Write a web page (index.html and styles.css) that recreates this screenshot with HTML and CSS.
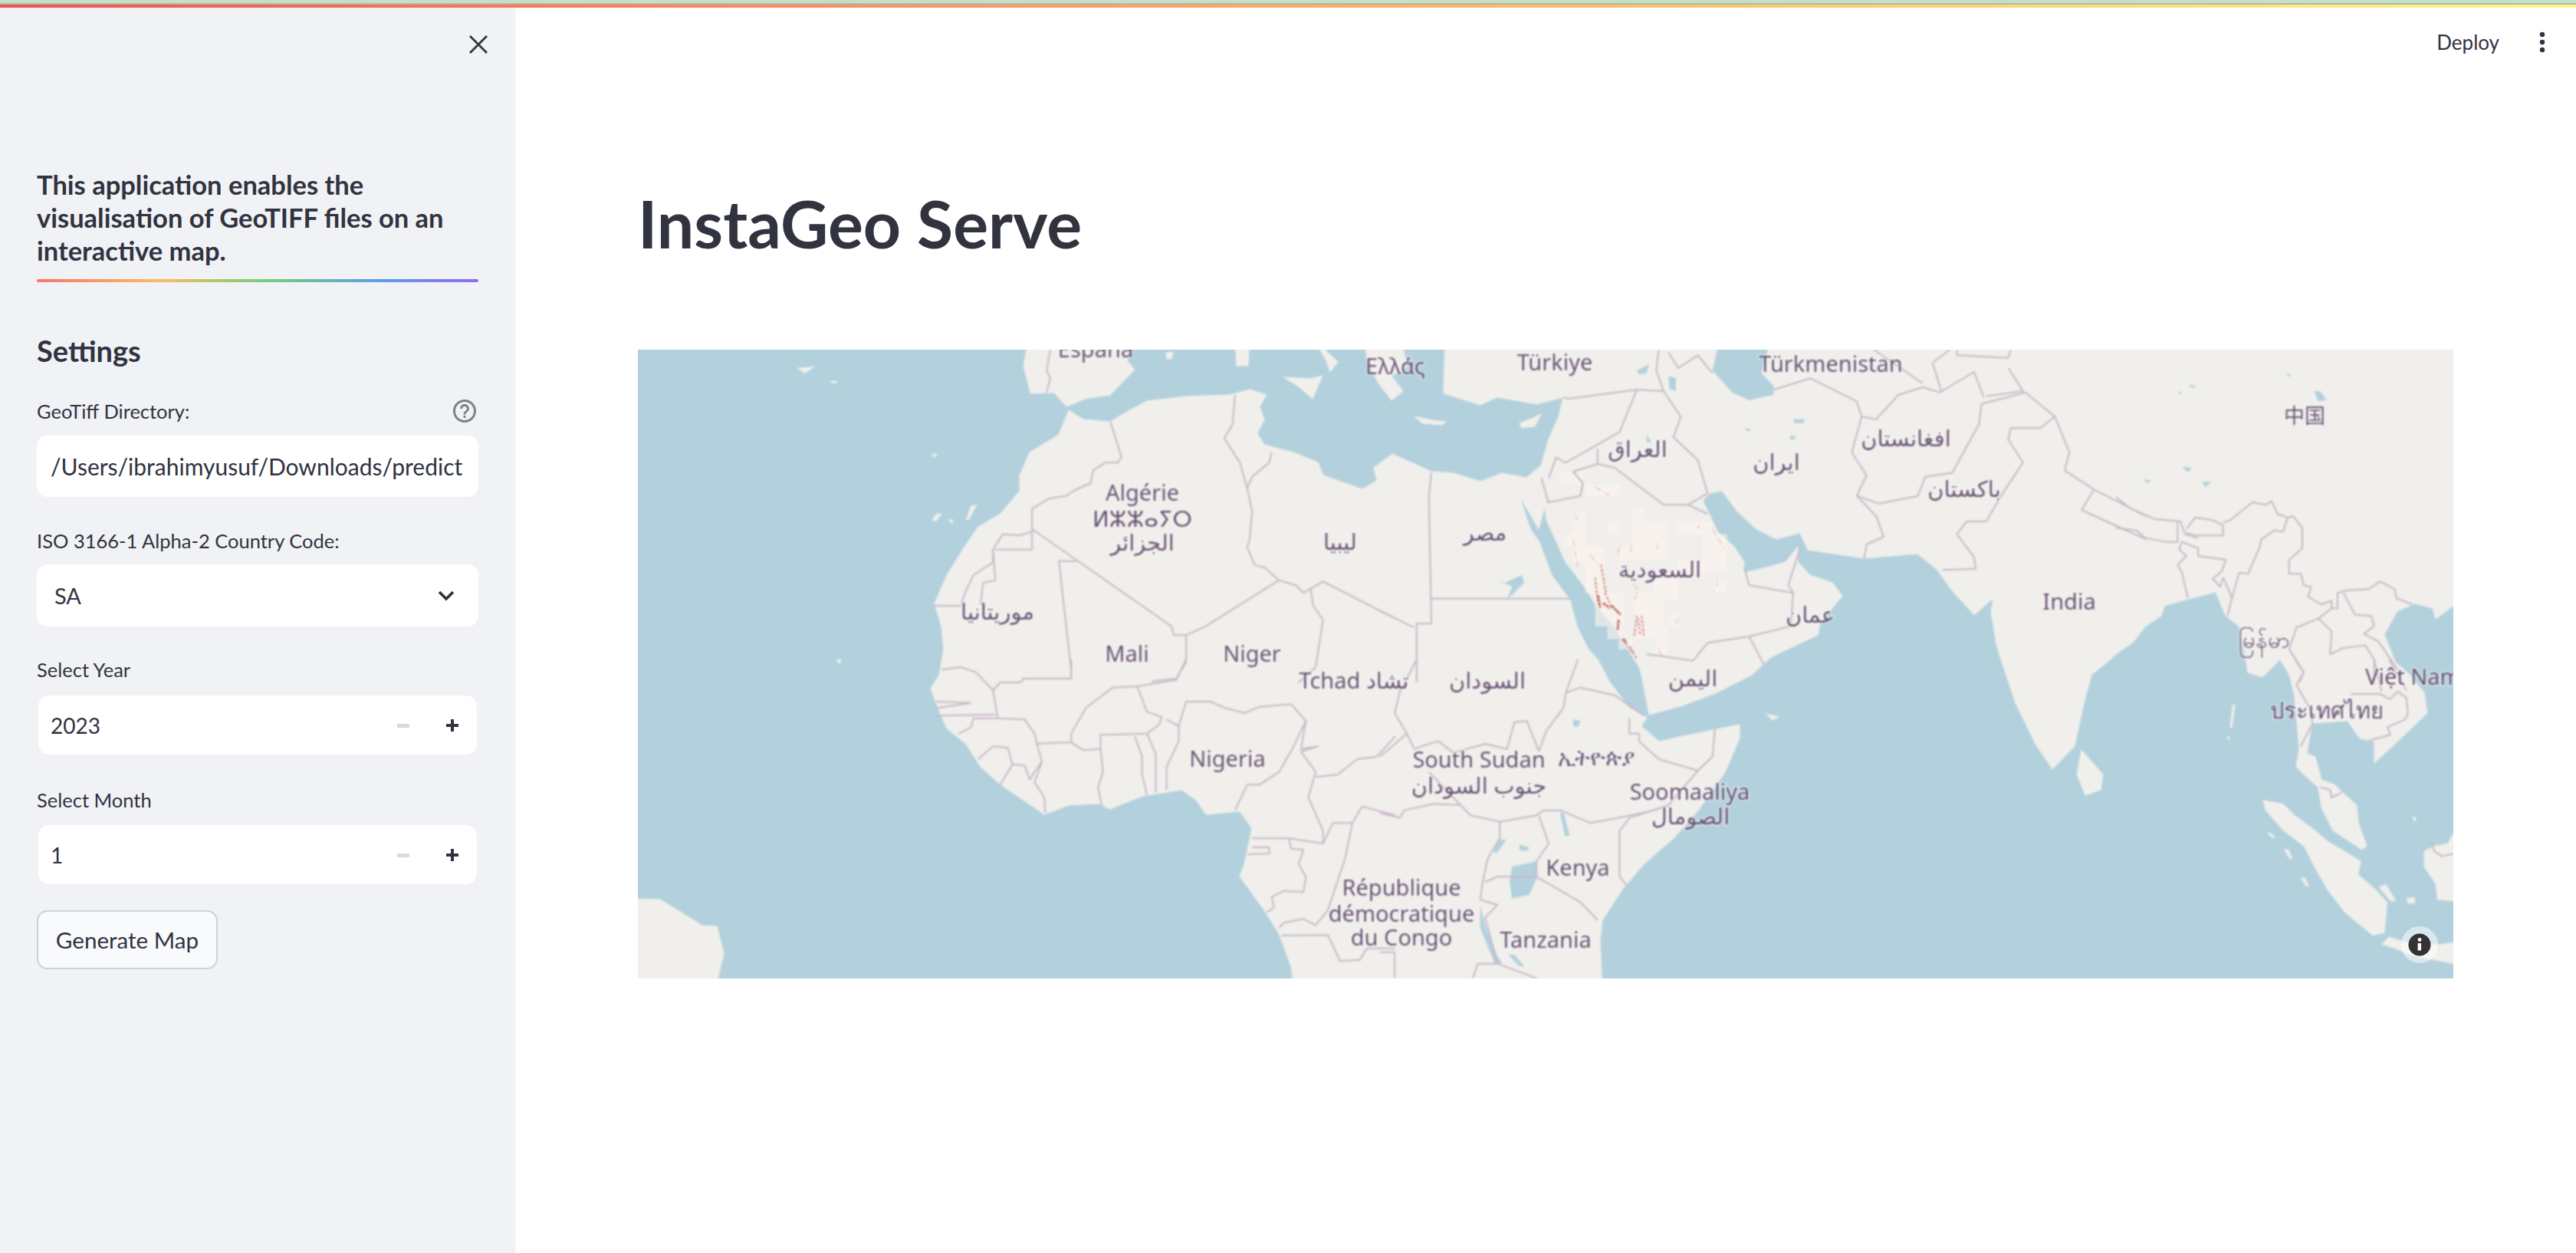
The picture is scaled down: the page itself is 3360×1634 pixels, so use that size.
FILE: index.html
```html
<!DOCTYPE html>
<html lang="en">
<head>
    <meta charset="UTF-8">
    <meta name="viewport" content="width=device-width, initial-scale=1.0">
    <title>InstaGeo Serve</title>
    <link rel="stylesheet" href="styles.css">
</head>
<body>

<div class="top-strip">
    <div class="strip-green"></div>
    <div class="strip-grey"></div>
    <div class="strip-rainbow"></div>
</div>

<div class="app">
    <aside class="sidebar">
        <div class="sidebar-close">
            <svg width="26" height="26" viewBox="0 0 26 26"><path class="close-x" d="M2 2L24 24M24 2L2 24"/></svg>
        </div>

        <p class="intro">This application enables the visualisation of GeoTIFF files on an interactive map.</p>
        <div class="rainbow-rule"></div>

        <h3 class="settings-title">Settings</h3>

        <div class="field-first">
            <div class="label label-row">
                <span>GeoTiff Directory:</span>
                <svg class="help-icon" width="36" height="36" viewBox="0 0 24 24"><path d="M11 18h2v-2h-2v2zm1-16C6.48 2 2 6.48 2 12s4.48 10 10 10 10-4.48 10-10S17.52 2 12 2zm0 18c-4.41 0-8-3.59-8-8s3.59-8 8-8 8 3.59 8 8-3.59 8-8 8zm0-14c-2.21 0-4 1.79-4 4h2c0-1.1.9-2 2-2s2 .9 2 2c0 2-3 1.75-3 5h2c0-2.25 3-2.5 3-5 0-2.21-1.79-4-4-4z"/></svg>
            </div>
            <input class="text-input" type="text" value="/Users/ibrahimyusuf/Downloads/predict" readonly>
        </div>

        <div class="field">
            <div class="label label-tight">ISO 3166-1 Alpha-2 Country Code:</div>
            <div class="select-box">
                <span>SA</span>
                <svg width="22" height="14" viewBox="0 0 22 14"><path class="chevron" d="M2 2L11 11L20 2"/></svg>
            </div>
        </div>

        <div class="field field-year">
            <div class="label">Select Year</div>
            <div class="number-box">
                <input class="number-input" type="text" value="2023" readonly>
                <div class="step-btn step-minus"></div>
                <div class="step-btn step-plus"></div>
            </div>
        </div>

        <div class="field">
            <div class="label label-tight">Select Month</div>
            <div class="number-box">
                <input class="number-input" type="text" value="1" readonly>
                <div class="step-btn step-minus"></div>
                <div class="step-btn step-plus"></div>
            </div>
        </div>

        <button class="generate-btn">Generate Map</button>
    </aside>

    <main class="main">
        <div class="toolbar">
            <span class="deploy">Deploy</span>
            <svg width="8" height="28" viewBox="0 0 8 28"><circle cx="4" cy="4" r="3.2"/><circle cx="4" cy="14" r="3.2"/><circle cx="4" cy="24" r="3.2"/></svg>
        </div>

        <h1 class="page-title">InstaGeo Serve</h1>

        <div class="map-wrap">
            <svg class="map" width="2368" height="820" viewBox="832 456 2368 820">
                <!-- land, in page coordinates; outer edges run past the frame so the blur doesn't fade them -->
                <g class="land">
                    <polygon points="1885,440 3220,440 3220,775 3200,790 3177,807 3173,793 3150,787 3127,797 3110,827 3124,863 3143,880 3162,903 3166,930 3127,967 3097,995 3097,967 3078,963 3062,940 3016,943 3013,957 3009,983 3020,987 3028,1017 3045,1023 3055,1033 3074,1050 3076,1073 3087,1103 3081,1108 3043,1083 3028,1053 3024,1027 3005,1010 2995,1000 2999,977 2993,907 2986,880 2974,860 2951,883 2932,877 2926,840 2921,817 2903,803 2890,772 2848,783 2823,790 2819,803 2798,817 2783,837 2760,853 2753,860 2728,880 2718,917 2706,973 2677,1003 2655,970 2629,917 2610,860 2604,840 2597,797 2600,780 2575,802 2546,770 2527,743 2501,722 2431,728 2358,717 2348,695 2317,703 2291,690 2266,667 2246,640 2230,643 2221,653 2234,680 2240,693 2262,713 2275,733 2275,747 2304,740 2329,733 2345,713 2345,733 2361,750 2390,760 2403,777 2374,813 2371,828 2310,857 2285,880 2240,903 2195,920 2151,932 2141,880 2138,870 2119,840 2106,817 2084,793 2068,767 2042,733 2017,678 2015,660 2007,690 1982,647 1996,690 2008,707 2024,750 2048,783 2057,817 2072,847 2084,860 2100,890 2125,923 2148,935 2141,947 2164,967 2195,960 2234,952 2269,945 2269,963 2250,1007 2215,1057 2183,1093 2144,1127 2116,1160 2090,1200 2087,1227 2090,1290 1688,1290 1684,1260 1668,1217 1649,1187 1617,1143 1623,1127 1633,1080 1617,1058 1573,1062 1560,1043 1541,1030 1490,1038 1448,1055 1432,1048 1394,1050 1362,1062 1330,1040 1305,1023 1279,1000 1260,970 1235,950 1225,927 1214,898 1225,880 1231,847 1228,817 1219,787 1235,750 1260,710 1276,687 1305,670 1330,640 1330,620 1343,590 1381,567 1394,535 1413,547 1448,550 1470,537 1496,523 1547,517 1604,515 1630,508 1652,515 1643,530 1649,547 1640,565 1649,580 1687,590 1719,603 1726,620 1777,638 1796,627 1792,610 1816,592 1845,605 1867,615 1896,617 1931,628 1959,617 1991,623 2010,607 2020,573 2033,543 2039,518 2004,527 1953,518 1931,528 1883,513"/>
                    <!-- spain -->
                    <polygon points="1342,440 1335,477 1344,513 1375,512 1391,530 1416,520 1448,515 1480,482 1470,470 1482,440"/>
                    <!-- south america corner -->
                    <polygon points="815,1172 861,1173 884,1187 916,1207 935,1208 944,1243 933,1290 815,1290"/>
                    <!-- med islands and italy -->
                    <polygon points="1611,440 1630,440 1628,477 1613,477"/>
                    <polygon points="1712,440 1745,472 1735,485 1730,470"/>
                    <polygon points="1675,492 1710,494 1725,490 1712,520 1695,505"/>
                    <polygon points="1521,460 1530,459 1528,468 1522,468"/>
                    <polygon points="1780,440 1828,440 1835,480 1815,490 1830,510 1815,522 1798,500 1783,470"/>
                    <polygon points="1845,543 1868,548 1886,550 1880,554 1855,552"/>
                    <polygon points="1982,552 2000,545 2010,540 2002,556 1985,558"/>
                    <!-- sri lanka, socotra -->
                    <polygon points="2715,978 2743,1010 2740,1030 2720,1037 2709,1010"/>
                    <polygon points="2304,931 2320,935 2312,939"/>
                </g>

                <!-- water on land, traced off the crops of the map -->
                <g transform="translate(1800 440) scale(0.6378 0.3333)" class="water">
                    <polygon points="695,0 680,130 720,215 755,245 805,225 805,190 780,140 800,0"/>
                    <polygon points="525,130 550,105 545,140 530,145"/>
                    <polygon points="590,150 605,160 605,210 592,200"/>
                    <polygon points="845,320 868,320 866,335 848,335"/>
                    <polygon points="745,355 760,360 752,368"/>
                    <polygon points="840,385 850,385 848,400 838,400"/>
                    <polygon points="235,945 255,960 290,930 295,960 260,1025 270,975"/>
                    <polygon points="545,380 555,410 545,410"/>
                </g>
                <g transform="translate(1800 860) scale(0.6378 0.3333)" class="water">
                    <polygon points="270,810 320,790 320,860 305,920 270,935 265,870"/>
                    <polygon points="395,235 410,240 405,265 395,260"/>
                    <polygon points="368,600 376,600 388,690 378,690"/>
                    <polygon points="245,705 258,705 238,760 232,750"/>
                    <polygon points="205,960 215,1040 240,1160 250,1190 235,1190 205,1050"/>
                    <polygon points="262,1155 275,1155 295,1200 285,1200"/>
                    <polygon points="285,725 305,735 300,750 285,745"/>
                </g>
                <g transform="translate(2760 440) scale(0.3827 0.3333)" class="water">
                    <polygon points="675,210 695,210 718,245 690,250"/>
                    <polygon points="245,185 275,190 260,198"/>
                    <polygon points="225,505 258,510 245,528"/>
                    <polygon points="292,565 325,565 305,585"/>
                    <polygon points="95,555 120,560 105,570"/>
                    <polygon points="210,212 228,215 215,222"/>
                    <polygon points="580,140 596,145 588,155"/>
                </g>

                <!-- islands east side -->
                <g transform="translate(2760 860) scale(0.3827 0.3333)" class="land">
                    <polygon points="500,550 570,565 610,610 680,670 720,710 780,750 835,790 825,840 885,900 925,950 915,1070 875,1080 780,990 720,900 680,820 640,730 570,670 510,590"/>
                    <polygon points="905,1115 930,1085 1000,1110 1100,1115 1200,1100 1200,1200 1100,1180 1000,1155 950,1130"/>
                    <polygon points="1200,660 1150,680 1130,720 1085,730 1050,750 1050,810 1090,880 1095,940 1200,950"/>
                    <polygon points="895,890 920,880 955,945 935,945"/>
                    <polygon points="990,935 1018,930 1018,955 995,955"/>
                    <polygon points="572,740 588,745 602,780 590,778"/>
                    <polygon points="630,852 645,855 658,890 645,885"/>
                    <polygon points="515,675 530,680 545,700 530,695"/>
                    <polygon points="398,175 406,178 395,270 388,265"/>
                    <polygon points="378,300 388,305 384,318"/>
                    <polygon points="1010,615 1025,620 1018,635"/>
                </g>
                <g transform="translate(820 440) scale(0.6378 0.3333)" class="land">
                    <polygon points="345,120 380,115 360,140"/>
                    <polygon points="620,455 632,458 625,470"/>
                    <polygon points="412,170 428,172 420,182"/>
                    <polygon points="700,660 712,655 695,715 690,712"/>
                    <polygon points="630,690 640,690 628,720 620,715"/>
                    <polygon points="655,712 664,715 660,730"/>
                    <polygon points="425,1260 435,1262 430,1278"/>
                </g>

                <!-- saudi heat layer -->
                <g transform="translate(1800 440) scale(0.6378 0.3333)">
                    <path class="heat-tiles" d="M395 680h25v200h-25zM375 770h25v50h-25zM515 670h25v190h-25zM465 720h25v50h-25zM420 575h70v50h-70zM610 720h70v50h-70zM540 720h50v150h-50zM660 770h50v150h-50zM420 820h40v180h-40zM490 820h70v50h-70zM610 870h70v50h-70zM560 920h50v110h-50zM685 950h25v50h-25zM440 1000h60v130h-60zM520 1000h60v175h-60zM465 1130h30v50h-30zM488 1180h30v40h-30zM565 1130h25v120h-25zM590 1080h20v50h-20zM365 525h50v50h-50z"/>
                    <path class="heat-dots" d="M398 690L405 720M395 790L405 900M655 730L650 745M680 750L705 830M440 585L470 620M490 820L485 860M515 815L510 855M565 805L572 845M690 950L690 975M610 1100L605 1115M570 1220L575 1245M500 890L530 1000M430 850L445 890M525 1000L520 1040"/>
                    <path class="heat-dense" d="M440 940L446 1040M452 890L462 1000M460 1000L475 1060M525 1090L520 1170M535 1090L540 1170M528 1100L532 1160M495 1180L525 1255M512 1210L520 1240"/>
                    <path class="heat-core" d="M446 1010L450 1058M456 1040L470 1058M474 1050L492 1085M488 1105L486 1145M498 1180L504 1196"/>
                </g>

                <!-- borders: each group keeps the scale of the crop it was read from -->
                <g transform="translate(820 440) scale(0.6378 0.3333)" class="borders">
                    <polyline points="862,48 855,130 862,160 855,215"/>
                    <polyline points="985,330 1000,420 1008,470 1000,490 975,490 950,520 945,570 910,600 895,620 860,630 825,670 825,830 750,830"/>
                    <polyline points="825,760 800,775 765,770 745,830 745,880 705,930 690,990 680,1040"/>
                    <polyline points="745,830 750,950 725,960 720,1040 730,1060"/>
                    <polyline points="625,1050 680,1050"/>
                    <polyline points="825,750 915,870 1080,1090 1110,1130 1115,1165 1140,1165 1180,1130 1330,950"/>
                    <polyline points="915,875 880,875 890,1050 905,1300 905,1335 805,1335"/>
                    <polyline points="1240,225 1235,340 1218,395 1250,490 1265,590"/>
                    <polyline points="1315,450 1310,490 1275,545 1265,590"/>
                    <polyline points="1265,590 1275,680 1270,790 1265,820 1280,890 1300,900 1330,950"/>
                    <polyline points="1330,950 1365,970 1380,1000 1420,955 1568,1100"/>
                    <polyline points="1395,985 1400,1050 1420,1105 1405,1290 1370,1350"/>
                    <polyline points="1140,1165 1140,1270 1120,1335 1070,1345"/>
                </g>
                <g transform="translate(820 860) scale(0.6378 0.3333)" class="borders">
                    <polyline points="640,40 680,30 710,50 745,120 760,90 800,90 810,75 905,75 905,0"/>
                    <polyline points="745,120 755,230 810,235 830,290 835,330 885,325 905,325 930,355 965,350"/>
                    <polyline points="905,325 905,290 935,190 990,110 1040,105 1120,80 1140,0"/>
                    <polyline points="1040,105 1060,205 1090,225 1085,255 1060,290 965,295 965,350 970,440 960,500 968,575"/>
                    <polyline points="1035,300 1050,380 1050,450 1060,530"/>
                    <polyline points="1060,290 1078,370 1078,520"/>
                    <polyline points="1100,235 1125,260 1125,320 1100,420 1100,510"/>
                    <polyline points="1125,260 1140,165 1190,165 1220,190 1260,210 1290,185 1355,175 1385,240 1360,340 1330,440 1290,490 1265,490 1240,590"/>
                    <polyline points="1385,240 1375,350 1410,340 1375,360 1405,440 1390,540 1420,670 1420,720"/>
                    <polyline points="1405,460 1450,450 1490,390 1530,380 1568,300"/>
                    <polyline points="835,330 845,400 830,480 850,540 852,600"/>
                    <polyline points="755,230 705,230 700,265 675,290"/>
                    <polyline points="715,390 745,340 775,345 785,410 760,490"/>
                    <polyline points="785,410 810,415 820,470 830,440 845,400"/>
                    <polyline points="1275,700 1350,700 1420,720"/>
                    <polyline points="1350,700 1355,740 1380,745 1370,800 1385,850 1380,910 1340,905 1315,930 1320,970 1305,990"/>
                    <polyline points="1275,735 1310,735 1310,760 1265,762"/>
                    <polyline points="1420,720 1440,640 1480,640 1500,575 1568,610"/>
                    <polyline points="1480,640 1465,780 1430,980 1405,1040 1380,1015 1340,1030 1330,1050"/>
                    <polyline points="1335,1080 1430,1078 1455,1180 1495,1175 1510,1130 1568,1130"/>
                    <polyline points="630,165 700,170 630,190"/>
                    <polyline points="630,220 750,215"/>
                </g>
                <g transform="translate(1800 440) scale(0.6378 0.3333)" class="borders">
                    <polyline points="105,530 100,620 105,1120 75,1120 75,1350"/>
                    <polyline points="0,1070 70,1135"/>
                    <polyline points="105,1022 390,1022"/>
                    <polyline points="330,550 345,650"/>
                    <polyline points="345,645 410,620 415,570 395,525 445,495 480,510 580,655 630,655 670,690"/>
                    <polyline points="375,235 385,240 525,205 580,210"/>
                    <polyline points="525,205 490,370 380,490 360,470 345,550"/>
                    <polyline points="580,210 615,310 600,390 650,480 670,610 630,655"/>
                    <polyline points="445,435 445,495"/>
                    <polyline points="805,205 880,160 975,250 985,310 1015,320 1060,225 1110,195 1145,215 1215,135 1235,235"/>
                    <polyline points="985,310 965,450 995,540 975,620 1015,700 1030,780 995,810 990,865"/>
                    <polyline points="975,620 1020,650 1100,620 1115,545 1170,530 1225,340 1230,260 1320,215"/>
                    <polyline points="1320,215 1380,310 1350,355 1290,355 1285,400 1315,490 1270,620 1240,720 1200,720 1180,770 1215,860 1218,905 1150,910"/>
                    <polyline points="545,1240 570,1245 640,1265 670,1195 755,1170 840,1130 845,1000 755,970 745,900"/>
                    <polyline points="755,1170 785,1280"/>
                    <polyline points="845,1000 835,970 850,880 860,820"/>
                    <polyline points="570,48 565,130 580,210"/>
                    <polyline points="590,60 610,120 650,70 680,140"/>
                    <polyline points="1010,48 1110,180"/>
                    <polyline points="1130,100 1165,48"/>
                    <polyline points="1130,100 1148,210"/>
                    <polyline points="1180,48 1180,70 1285,80 1290,48"/>
                    <polyline points="1285,120 1315,210 1240,230"/>
                    <polyline points="1380,310 1410,450 1400,520 1460,595 1568,700"/>
                    <polyline points="1460,595 1435,675 1520,750 1568,790"/>
                </g>
                <g transform="translate(1800 860) scale(0.6378 0.3333)" class="borders">
                    <polyline points="75,0 40,130 30,210 55,290 70,350 100,330 120,320 150,365 215,330 260,350 275,245 300,240 325,360"/>
                    <polyline points="55,290 0,380"/>
                    <polyline points="100,440 165,570 185,610 245,635 320,610 335,590 370,590 430,640 500,615 560,590 590,570"/>
                    <polyline points="0,600 40,620 50,590 110,565 165,570"/>
                    <polyline points="405,0 380,130 375,190 340,280 325,360"/>
                    <polyline points="380,130 410,110 480,140 540,220"/>
                    <polyline points="510,230 510,290 530,290 530,320 570,390 650,435 680,380 685,270"/>
                    <polyline points="650,435 590,570 510,620 490,670 490,850 505,885"/>
                    <polyline points="325,610 345,720 320,790 320,850 240,850 215,870"/>
                    <polyline points="320,850 410,950 445,1020"/>
                    <polyline points="245,635 245,700 220,780 210,870 205,940 240,960 215,1010 240,1190 320,1247"/>
                    <polyline points="190,1247 200,1190 240,1190"/>
                    <polyline points="0,1145 30,1145 30,1247"/>
                </g>
                <g transform="translate(2760 440) scale(0.3827 0.3333)" class="borders">
                    <polyline points="0,625 50,670 130,710 220,720 235,770 280,785"/>
                    <polyline points="0,745 70,755 100,785 170,800 210,800 210,720"/>
                    <polyline points="240,750 270,705 330,715 365,735 365,775 270,775 240,765"/>
                    <polyline points="365,725 390,715 465,645 510,655 530,640 550,690 585,705 570,760 540,755 495,790 490,820 450,925 420,920 395,1020 380,1090"/>
                    <polyline points="585,705 605,700 635,745 635,825 590,870 590,925 630,925 640,970 665,975 655,1015 700,1045 735,1030 735,1060 755,1060 755,1000 785,990 860,985 900,955 950,985 955,1020 1010,1045"/>
                    <polyline points="225,800 280,825 280,855 375,870 360,915 330,945 355,975 365,940 385,990 395,1020"/>
                    <polyline points="225,800 215,830 240,855 210,890 225,920 245,1020"/>
                    <polyline points="735,1060 690,1100 615,1135 590,1220 640,1310 625,1350"/>
                    <polyline points="690,1100 735,1150 730,1240 775,1215 850,1205 880,1260 880,1350"/>
                    <polyline points="775,1000 815,1085 870,1090 880,1130 845,1160 895,1190 960,1300"/>
                </g>
                <g transform="translate(2760 860) scale(0.3827 0.3333)" class="borders">
                    <polyline points="610,0 640,50 615,100 660,190 670,250 630,340"/>
                    <polyline points="800,135 900,135 935,155 960,125 990,150 995,210 985,235 925,265 935,295 870,315 860,320"/>
                    <polyline points="880,0 905,125"/>
                    <polyline points="930,0 990,120"/>
                    <polyline points="695,500 730,510 735,540 770,520"/>
                    <polyline points="1075,715 1085,750 1110,770 1150,760"/>
                </g>

                <!-- place names -->
                <g class="labels">
                    <text x="1429" y="466">España</text>
                    <text x="1820" y="488">Ελλάς</text>
                    <text x="2028" y="483">Türkiye</text>
                    <text x="2388" y="485">Türkmenistan</text>
                    <text x="3006" y="552" class="cjk">中国</text>
                    <text x="2136" y="596">العراق</text>
                    <text x="2486" y="582">افغانستان</text>
                    <text x="2317" y="613">ايران</text>
                    <text x="2562" y="648">باكستان</text>
                    <text x="1490" y="653">Algérie</text>
                    <text x="1490" y="687">ⵍⵣⵣⴰⵢⵔ</text>
                    <text x="1490" y="718">الجزائر</text>
                    <text x="1748" y="717">ليبيا</text>
                    <text x="1937" y="705">مصر</text>
                    <text x="2165" y="753">السعودية</text>
                    <text x="2699" y="795">India</text>
                    <text x="1301" y="808">موريتانيا</text>
                    <text x="2361" y="812">عمان</text>
                    <text x="2953" y="845">မြန်မာ</text>
                    <text x="1470" y="863">Mali</text>
                    <text x="1633" y="863">Niger</text>
                    <text x="1766" y="898">Tchad تشاد</text>
                    <text x="1940" y="898">السودان</text>
                    <text x="2208" y="895">اليمن</text>
                    <text x="3085" y="893" class="label-start">Việt Nam</text>
                    <text x="3035" y="937">ประเทศไทย</text>
                    <text x="1601" y="1000">Nigeria</text>
                    <text x="1929" y="1001">South Sudan</text>
                    <text x="2082" y="998">ኢትዮጵያ</text>
                    <text x="1929" y="1035">جنوب السودان</text>
                    <text x="2204" y="1043">Soomaaliya</text>
                    <text x="2205" y="1075">الصومال</text>
                    <text x="2058" y="1142">Kenya</text>
                    <text x="1828" y="1168">République</text>
                    <text x="1828" y="1202">démocratique</text>
                    <text x="1828" y="1233">du Congo</text>
                    <text x="2016" y="1236">Tanzania</text>
                </g>
            </svg>

            <div class="map-info">
                <svg width="30" height="30" viewBox="0 0 30 30">
                    <circle cx="15" cy="15" r="14.5" fill="#333333"/>
                    <circle cx="15" cy="8.5" r="2.4" fill="#ffffff"/>
                    <path d="M12.6 13h4.4v9.5h-4.4z" fill="#ffffff"/>
                </svg>
            </div>
        </div>
    </main>
</div>

</body>
</html>
```

FILE: styles.css
```css
html, body {
    margin: 0;
    padding: 0;
    background: #ffffff;
}
body {
    font-family: 'Lato', 'Noto Sans', sans-serif;
    color: #31333f;
    width: 3360px;
    height: 1634px;
    overflow: hidden;
}

/* top strip */
.strip-green { height: 4px; background: #c8dfc6; }
.strip-grey { height: 2px; background: #a9bcab; }
.strip-rainbow { height: 4px; background: linear-gradient(90deg, #f0524f, #ff8a5c 30%, #fff68a); }

.app {
    display: flex;
    height: 1624px;
}

/* sidebar */
.sidebar {
    width: 672px;
    box-sizing: border-box;
    padding: 0 48px;
    background: #f0f2f6;
    flex-shrink: 0;
}
.sidebar-close {
    display: flex;
    justify-content: flex-end;
    height: 209px;
    padding-top: 35px;
    margin-right: -13px;
    box-sizing: border-box;
}
.close-x {
    fill: none;
    stroke: #31333f;
    stroke-width: 2.8;
}
.intro {
    margin: 0;
    font-size: 34.5px;
    line-height: 43px;
    font-weight: 700;
}
.rainbow-rule {
    height: 4px;
    margin-top: 16px;
    border-radius: 2px;
    background: linear-gradient(90deg, #f6766e, #fbbc5e 28%, #6fd07c 52%, #5c9ceb 78%, #8f6cf5);
}
.settings-title {
    margin: 64px 0 0 0;
    font-size: 38px;
    line-height: 50px;
    font-weight: 700;
}
.field-first { margin-top: 39px; }
.field { margin-top: 42px; }
.field-year { margin-top: 41px; }

.label {
    font-size: 25.5px;
    line-height: 30px;
    margin-bottom: 17px;
}
.label-tight { margin-bottom: 16px; }
.label-row {
    display: flex;
    justify-content: space-between;
    align-items: center;
    height: 30px;
}
.help-icon {
    fill: #7f8088;
}

.text-input {
    display: block;
    width: 100%;
    height: 80px;
    box-sizing: border-box;
    padding: 0 8px 0 18px;
    border: none;
    border-radius: 14px;
    background: #ffffff;
    color: #31333f;
    font-family: inherit;
    font-size: 30px;
    outline: none;
}
.select-box {
    display: flex;
    justify-content: space-between;
    align-items: center;
    height: 81px;
    box-sizing: border-box;
    padding: 0 31px 0 23px;
    border-radius: 14px;
    background: #ffffff;
    font-size: 29px;
}
.chevron {
    fill: none;
    stroke: #31333f;
    stroke-width: 3.6;
}
.number-box {
    display: flex;
    height: 77px;
    border: 2px solid #f0f2f6;
    border-radius: 16px;
    background: #ffffff;
    background-clip: padding-box;
}
.number-input {
    flex: 1;
    min-width: 0;
    box-sizing: border-box;
    padding: 0 16px;
    border: none;
    border-radius: 14px;
    background: transparent;
    color: #31333f;
    font-family: inherit;
    font-size: 28px;
    outline: none;
}
.step-btn {
    position: relative;
    width: 64px;
    flex-shrink: 0;
}
.step-minus::before {
    content: "";
    position: absolute;
    left: 24px;
    top: 37px;
    width: 16px;
    height: 5px;
    background: #d5dae5;
}
.step-plus::before {
    content: "";
    position: absolute;
    left: 24px;
    top: 37px;
    width: 16px;
    height: 4px;
    background: #31333f;
}
.step-plus::after {
    content: "";
    position: absolute;
    left: 30px;
    top: 31px;
    width: 4px;
    height: 16px;
    background: #31333f;
}
.generate-btn {
    display: block;
    width: 236px;
    height: 77px;
    margin-top: 32px;
    border: 2px solid #d0d1d5;
    border-radius: 14px;
    background: #f9fafc;
    color: #31333f;
    font-family: inherit;
    font-size: 29.6px;
    padding: 0;
}

/* main */
.main {
    flex: 1;
    min-width: 0;
    padding: 0 160px;
}
.toolbar {
    display: flex;
    justify-content: flex-end;
    align-items: center;
    height: 90px;
    margin-right: -120px;
}
.toolbar svg { fill: #31333f; }
.deploy {
    font-size: 26px;
    margin-right: 52px;
}
.page-title {
    margin: 136px 0 110px 0;
    font-size: 86px;
    line-height: 110px;
    font-weight: 700;
}

/* map */
.map-wrap {
    position: relative;
    width: 2368px;
    height: 820px;
    overflow: hidden;
    background: #b3d1dd;
}
.map {
    display: block;
    filter: blur(0.9px);
    overflow: visible;
}
.land polygon {
    fill: #f0efeb;
    stroke: #f0efeb;
    stroke-width: 1;
    stroke-linejoin: round;
}
.water polygon { fill: #b3d1dd; }
.borders polyline {
    fill: none;
    stroke: #c9b7c8;
    stroke-width: 2;
    stroke-linejoin: round;
    vector-effect: non-scaling-stroke;
}
.heat-tiles { fill: #fdf3f0; opacity: 0.6; }
.heat-dots, .heat-dense, .heat-core {
    fill: none;
    vector-effect: non-scaling-stroke;
}
.heat-dots { stroke: #d9928c; stroke-width: 1.5; stroke-dasharray: 1 3 2 2 1 5; }
.heat-dense { stroke: #cf8a84; stroke-width: 2.5; stroke-dasharray: 2 1 1 2 3 2; }
.heat-core { stroke: #ba6560; stroke-width: 3; stroke-dasharray: 4 1 3 1; }
.labels text {
    font-family: 'Noto Sans', 'DejaVu Sans', 'Noto Sans CJK SC', sans-serif;
    font-size: 29px;
    fill: #655070;
    text-anchor: middle;
    paint-order: stroke;
    stroke: rgba(255, 255, 255, 0.5);
    stroke-width: 3px;
}
.labels .cjk { font-family: 'Noto Sans CJK SC', sans-serif; font-size: 27px; }
.labels .label-start { text-anchor: start; }
.map-info {
    position: absolute;
    right: 20px;
    bottom: 20px;
    width: 48px;
    height: 48px;
    display: flex;
    justify-content: center;
    align-items: center;
    border-radius: 50%;
    background: rgba(255, 255, 255, 0.5);
}
```
